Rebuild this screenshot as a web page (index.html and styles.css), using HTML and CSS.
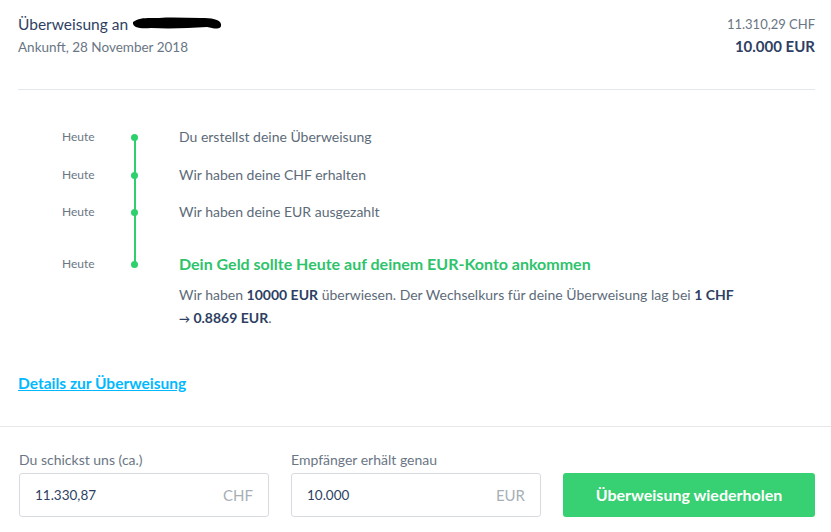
FILE: index.html
```html
<!DOCTYPE html>
<html lang="de">
<head>
  <meta charset="UTF-8">
  <meta name="viewport" content="width=device-width, initial-scale=1.0">
  <title>Überweisung</title>
  <link rel="stylesheet" href="styles.css">
</head>
<body>

  <div class="kopf">
    <div class="kopf-links">
      <div class="titel">Überweisung an
        <svg class="geschwaerzt" width="92" height="18" viewBox="0 0 92 18">
          <path d="M2 8 C8 3 18 4 28 4 C42 3 56 4 70 4 C80 4 89 5 90 10 C91 16 84 15 76 13 C58 14 40 15 20 14 C10 15 1 14 2 8 Z" fill="#000"/>
        </svg>
      </div>
      <div class="ankunft">Ankunft, 28 November 2018</div>
    </div>
    <div class="kopf-rechts">
      <div class="betrag-chf">11.310,29 CHF</div>
      <div class="betrag-eur">10.000 EUR</div>
    </div>
  </div>

  <div class="zeitleiste">
    <div class="schritt">
      <div class="datum">Heute</div>
      <div class="punkt"></div>
      <div class="text">Du erstellst deine Überweisung</div>
    </div>
    <div class="schritt">
      <div class="datum">Heute</div>
      <div class="punkt"></div>
      <div class="text">Wir haben deine CHF erhalten</div>
    </div>
    <div class="schritt">
      <div class="datum">Heute</div>
      <div class="punkt"></div>
      <div class="text">Wir haben deine EUR ausgezahlt</div>
    </div>
    <div class="schritt letzter">
      <div class="datum">Heute</div>
      <div class="punkt"></div>
      <div class="text">
        <div class="ziel">Dein Geld sollte Heute auf deinem EUR-Konto ankommen</div>
        <p class="info">Wir haben <strong>10000 EUR</strong> überwiesen. Der Wechselkurs für deine Überweisung lag bei <strong>1 CHF <span class="pfeil">→</span> 0.8869 EUR</strong>.</p>
      </div>
    </div>
  </div>

  <div class="details">
    <a href="#">Details zur Überweisung</a>
  </div>

  <div class="fuss">
    <div class="feld">
      <label>Du schickst uns (ca.)</label>
      <div class="eingabe">
        <span class="wert">11.330,87</span>
        <span class="waehrung">CHF</span>
      </div>
    </div>
    <div class="feld">
      <label>Empfänger erhält genau</label>
      <div class="eingabe">
        <span class="wert">10.000</span>
        <span class="waehrung">EUR</span>
      </div>
    </div>
    <button class="wiederholen">Überweisung wiederholen</button>
  </div>

</body>
</html>
```

FILE: styles.css
```css
* {
  box-sizing: border-box;
}

body {
  margin: 0;
  font-family: Lato, 'Open Sans', sans-serif;
  background: #fff;
  color: #5d6b79;
}

.kopf {
  display: flex;
  justify-content: space-between;
  margin: 0 16px 0 18px;
  padding: 13px 0 34px;
  border-bottom: 1px solid #e5e8eb;
}

.titel {
  font-size: 15.5px;
  color: #2e3f63;
  display: flex;
  align-items: center;
  height: 22px;
}

.geschwaerzt {
  margin-left: 3px;
  margin-top: -2px;
}

.ankunft {
  font-size: 13.5px;
  margin-top: 4px;
  color: #6a7684;
}

.kopf-rechts {
  text-align: right;
}

.betrag-chf {
  font-size: 13px;
  color: #6a7684;
  margin-top: 3px;
}

.betrag-eur {
  font-size: 15px;
  font-weight: 700;
  color: #2e3f63;
  margin-top: 5px;
}

.zeitleiste {
  padding: 39px 0 0 62px;
}

.schritt {
  display: flex;
  align-items: flex-start;
  height: 37.5px;
}

.schritt.letzter {
  height: auto;
  margin-top: 14px;
}

.datum {
  width: 69px;
  font-size: 12px;
  line-height: 16px;
  color: #6a7684;
}

.punkt {
  width: 7px;
  height: 7px;
  border-radius: 50%;
  background: #2ed06e;
  margin-top: 5px;
  position: relative;
}

.punkt::after {
  content: "";
  position: absolute;
  left: 2.5px;
  top: 4px;
  width: 2px;
  height: 38px;
  background: #2ed06e;
}

.schritt:nth-child(3) .punkt::after {
  height: 51px;
}

.letzter .punkt::after {
  display: none;
}

.text {
  margin-left: 41px;
  font-size: 14px;
  line-height: 16px;
  color: #5d6b79;
}

.ziel {
  font-size: 16px;
  font-weight: 700;
  color: #2ec36b;
  line-height: 16px;
}

.info {
  margin: 11px 0 0;
  max-width: 556px;
  line-height: 23px;
}

.info strong {
  color: #2e3f63;
}

.pfeil {
  font-size: 11px;
}

.details {
  padding: 43px 18px 34px;
}

.details a {
  font-size: 15.5px;
  font-weight: 700;
  color: #00b9ff;
  text-decoration: underline;
}

.fuss {
  border-top: 1px solid #e5e8eb;
  display: flex;
  align-items: flex-end;
  gap: 22px;
  padding: 24px 16px 0 19px;
}

.feld {
  width: 250px;
}

.feld label {
  display: block;
  font-size: 14px;
  color: #6a7684;
  margin-bottom: 5px;
}

.eingabe {
  height: 44px;
  border: 1px solid #d7dbdf;
  border-radius: 3px;
  display: flex;
  align-items: center;
  justify-content: space-between;
  padding: 0 15px;
}

.wert {
  font-size: 13.5px;
  color: #2e3f63;
}

.waehrung {
  font-size: 15px;
  color: #a7afb7;
}

.wiederholen {
  flex: 1;
  height: 44px;
  border: none;
  border-radius: 3px;
  background: #37d072;
  color: #fff;
  font-family: inherit;
  font-size: 16px;
  font-weight: 700;
  cursor: pointer;
}
```
